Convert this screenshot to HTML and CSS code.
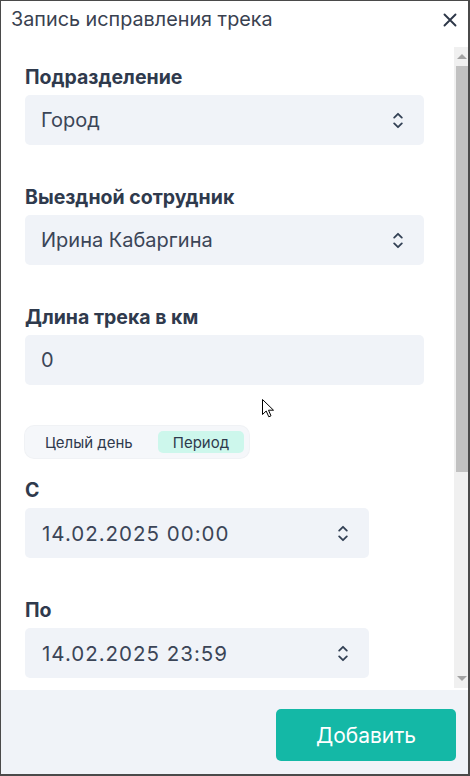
FILE: index.html
```html
<!DOCTYPE html>
<html>
	<head>
		<meta charset="utf-8">
		<title>Запись исправления трека</title>
		<link rel="stylesheet" href="styles.css">
	</head>
	<body>
		<div class="window">
			<div class="titlebar">
				<span class="title">Запись исправления трека</span>
				<a href="javascript:void(0)" class="close">
					<svg width="14" height="14" viewBox="0 0 14 14"><path d="M1.5 1.5 L12.5 12.5 M12.5 1.5 L1.5 12.5" stroke="#2d3748" stroke-width="1.9" fill="none" stroke-linecap="round"/></svg>
				</a>
			</div>
			<div class="main">
				<div class="form">
					<div class="field">
						<label>Подразделение</label>
						<div class="select wide">
							<span>Город</span>
							<svg class="arrows" width="10" height="17" viewBox="0 0 10 17"><path d="M1.2 5.6 L5 1.8 L8.8 5.6 M1.2 11.4 L5 15.2 L8.8 11.4" stroke="#334155" stroke-width="1.8" fill="none" stroke-linecap="round" stroke-linejoin="round"/></svg>
						</div>
					</div>
					<div class="field">
						<label>Выездной сотрудник</label>
						<div class="select wide">
							<span>Ирина Кабаргина</span>
							<svg class="arrows" width="10" height="17" viewBox="0 0 10 17"><path d="M1.2 5.6 L5 1.8 L8.8 5.6 M1.2 11.4 L5 15.2 L8.8 11.4" stroke="#334155" stroke-width="1.8" fill="none" stroke-linecap="round" stroke-linejoin="round"/></svg>
						</div>
					</div>
					<div class="field">
						<label>Длина трека в км</label>
						<div class="select wide">
							<span>0</span>
						</div>
					</div>
					<div class="toggle">
						<span class="opt">Целый день</span>
						<span class="opt active">Период</span>
					</div>
					<div class="field first">
						<label>С</label>
						<div class="select date">
							<span>14.02.2025 00:00</span>
							<svg class="arrows" width="10" height="17" viewBox="0 0 10 17"><path d="M1.2 5.6 L5 1.8 L8.8 5.6 M1.2 11.4 L5 15.2 L8.8 11.4" stroke="#334155" stroke-width="1.8" fill="none" stroke-linecap="round" stroke-linejoin="round"/></svg>
						</div>
					</div>
					<div class="field">
						<label>По</label>
						<div class="select date">
							<span>14.02.2025 23:59</span>
							<svg class="arrows" width="10" height="17" viewBox="0 0 10 17"><path d="M1.2 5.6 L5 1.8 L8.8 5.6 M1.2 11.4 L5 15.2 L8.8 11.4" stroke="#334155" stroke-width="1.8" fill="none" stroke-linecap="round" stroke-linejoin="round"/></svg>
						</div>
					</div>
					<!-- указатель мыши -->
					<svg class="cursor" width="13" height="19" viewBox="0 0 13 19"><path d="M0.5 0.5 L0.5 15.5 L4.2 12 L6.8 17.8 L9 16.8 L6.5 11.2 L11.5 11.2 Z" fill="#fff" stroke="#000" stroke-width="1" stroke-linejoin="round"/></svg>
				</div>
				<div class="scrollbar">
					<div class="btn up"></div>
					<div class="thumb"></div>
					<div class="rest"></div>
					<div class="btn down"></div>
				</div>
			</div>
			<div class="footer">
				<a href="javascript:void(0)" class="add">Добавить</a>
			</div>
		</div>
	</body>
</html>
```
FILE: styles.css
```css
*{margin:0;padding:0;box-sizing:border-box;}
a{text-decoration:none;}
body{font-family:Inter,"Noto Sans",sans-serif;background:#fff;}
div.window{width:470px;height:776px;display:flex;flex-direction:column;border:1px solid #4a4a4a;border-right-width:2px;border-bottom-width:2px;background:#fff;}
div.titlebar{height:46px;flex:none;display:flex;justify-content:space-between;align-items:flex-start;padding:6px 11px 0 10px;}
div.titlebar>span.title{font-size:19.8px;line-height:24px;color:#394150;}
div.titlebar>a.close{display:block;width:14px;height:14px;margin-top:6px;}
div.titlebar>a.close>svg{display:block;}
div.main{flex:1;display:flex;overflow:hidden;}
div.form{flex:1;position:relative;padding:19px 30px 0 24px;}
div.field{margin-bottom:41px;}
div.field.first{margin-top:21px;}
div.field>label{display:block;font-size:19.5px;line-height:22px;font-weight:700;color:#2f3a4d;margin-bottom:7px;}
div.select{height:50px;background:#f0f3f8;border-radius:5px;display:flex;align-items:center;justify-content:space-between;padding:0 21px 0 16px;font-size:20px;color:#3b4557;}
div.select.date{width:344px;font-size:20.5px;letter-spacing:1px;padding-left:17px;}
div.select>svg.arrows{display:block;flex:none;}
div.toggle{display:inline-flex;gap:10px;padding:5px;height:32px;background:#f5f7fa;border-radius:9px;box-shadow:0 0 0 1px #f0f2f5;}
div.toggle>span.opt{display:flex;align-items:center;padding:0 15px;height:22px;border-radius:5px;font-size:15px;color:#2f3a4d;}
div.toggle>span.opt.active{background:#cdf7ec;}
svg.cursor{position:absolute;left:261px;top:352px;}
div.scrollbar{width:14px;flex:none;display:flex;flex-direction:column;background:#f0f0f0;padding-left:2px;margin-bottom:2px;}
div.scrollbar>div.btn{height:17px;flex:none;position:relative;}
div.scrollbar>div.btn::after{content:"";position:absolute;left:1px;border-left:5px solid transparent;border-right:5px solid transparent;}
div.scrollbar>div.up::after{top:7px;border-bottom:5px solid #a3a3a3;}
div.scrollbar>div.down::after{top:5px;border-top:5px solid #a3a3a3;}
div.scrollbar>div.thumb{height:406px;flex:none;background:#c1c1c1;margin-top:2px;}
div.scrollbar>div.rest{flex:1;}
div.footer{height:84px;flex:none;background:#f0f3f8;display:flex;justify-content:flex-end;align-items:flex-start;padding:19px 12px 0 0;}
div.footer>a.add{display:flex;align-items:center;justify-content:center;width:180px;height:52px;border-radius:5px;background:#14b8a6;color:#fff;font-size:21px;}
```
